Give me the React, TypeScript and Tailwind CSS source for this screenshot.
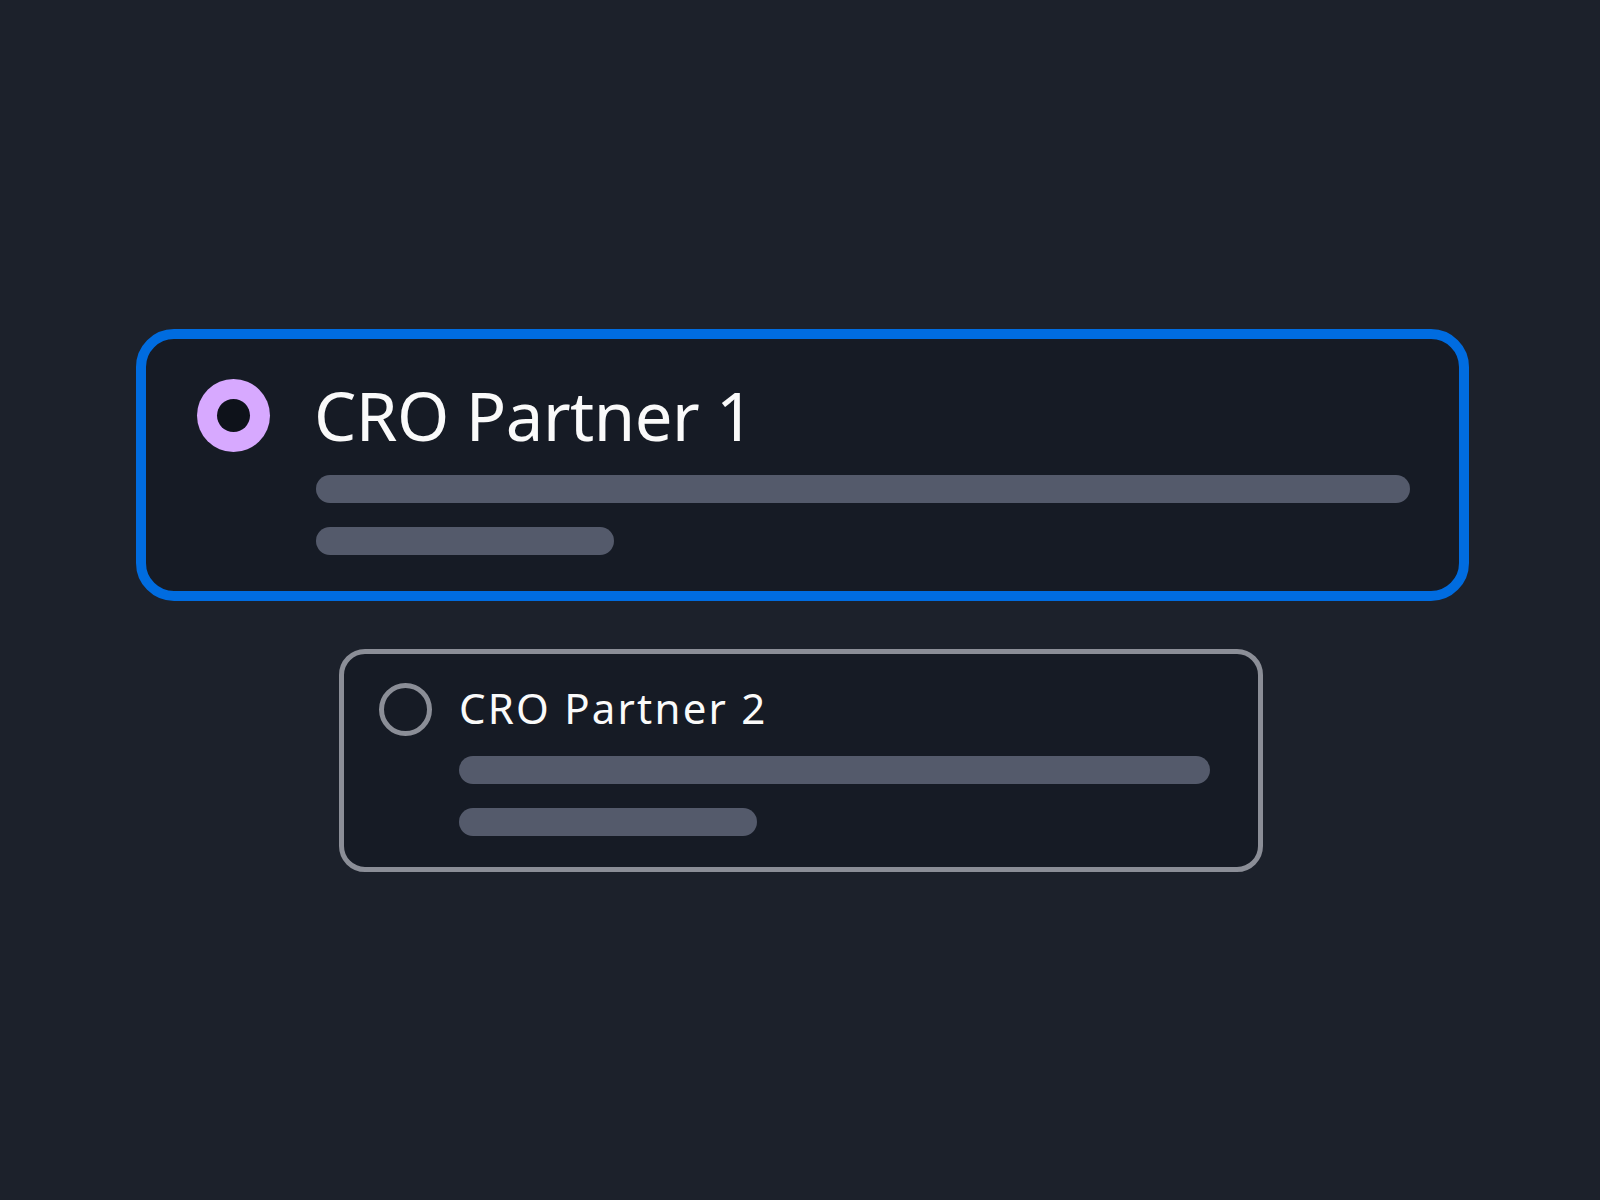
import React from "react";

export default function App() {
  return (
    <div
      className="w-[1600px] h-[1200px] bg-[#1c212b] flex flex-col items-center justify-center gap-[48px]"
      style={{ fontFamily: '"Noto Sans", "Open Sans", sans-serif' }}
    >
      {/* Card 1 - selected */}
      <div className="ml-[5px] w-[1333px] h-[272px] rounded-[38px] border-[10px] border-[#006ce0] bg-[#161b25] pl-[51px] pr-[49px] pt-[43px] flex gap-[46px]">
        <div className="shrink-0 h-[67px] flex items-center">
          <div className="w-[73px] h-[73px] rounded-full bg-[#d7a9ff] flex items-center justify-center">
            <div className="w-[33px] h-[33px] rounded-full bg-[#0e121a]" />
          </div>
        </div>
        <div className="flex-1 flex flex-col">
          <div className="text-[67px] leading-none tracking-[-0.5px] text-[#fafafa] -ml-[2px] h-[67px]">CRO Partner 1</div>
          <div className="mt-[26px] h-[28px] w-full rounded-full bg-[#545a6b]" />
          <div className="mt-[24px] h-[28px] w-[298px] rounded-full bg-[#545a6b]" />
        </div>
      </div>

      {/* Card 2 - unselected */}
      <div className="ml-[2px] w-[924px] h-[223px] rounded-[26px] border-[5px] border-[#8b8e97] bg-[#161b25] pl-[35px] pr-[48px] pt-[33px] flex gap-[27px]">
        <div className="shrink-0 h-[41px] flex items-center">
          <div className="mt-[4px] w-[53px] h-[53px] rounded-full border-[5px] border-[#8b8e97]" />
        </div>
        <div className="flex-1 flex flex-col">
          <div className="text-[42px] leading-none tracking-[2.2px] text-[#fafafa] h-[41px]">CRO Partner 2</div>
          <div className="mt-[28px] h-[28px] w-full rounded-full bg-[#545a6b]" />
          <div className="mt-[24px] h-[28px] w-[298px] rounded-full bg-[#545a6b]" />
        </div>
      </div>
    </div>
  );
}
